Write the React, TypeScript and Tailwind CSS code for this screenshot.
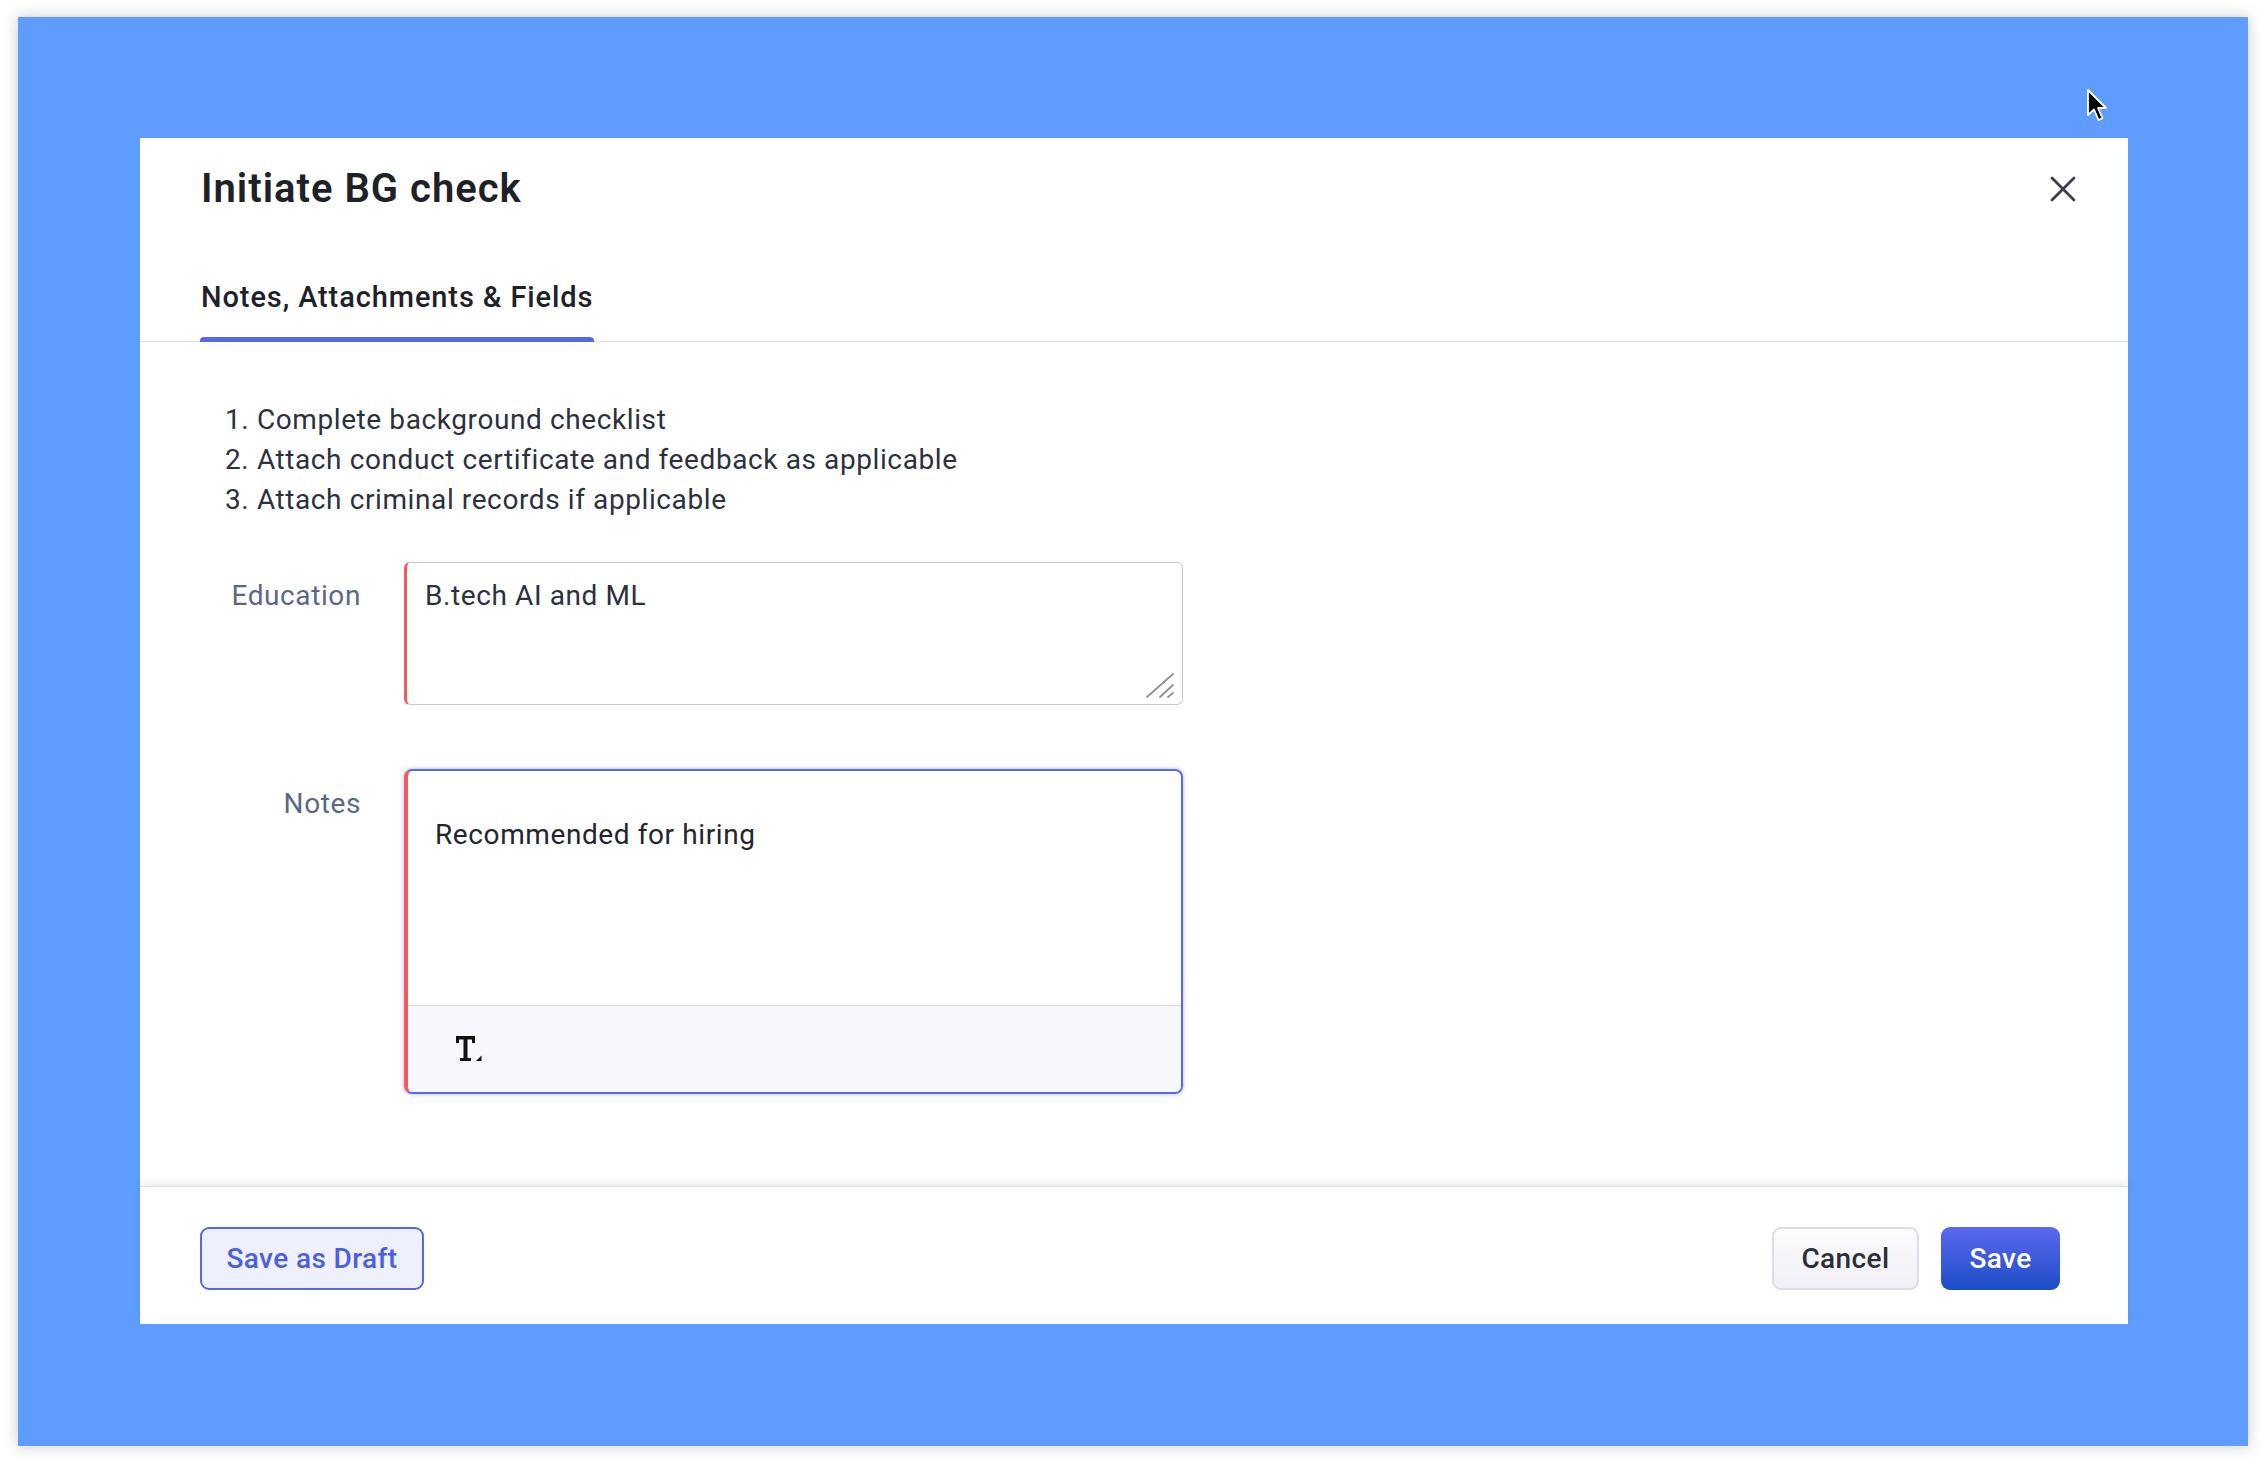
import { X } from 'lucide-react';

function Cursor() {
  return (
    <svg width="22" height="36" viewBox="0 0 22 36" className="absolute left-[2068px] top-[71px]">
      <path
        d="M2 2 L2 27 L8 21.5 L12.5 32 L16.5 30.2 L12 20 L20 20 Z"
        fill="#000"
        stroke="#fff"
        strokeWidth="1.8"
        strokeLinejoin="round"
      />
    </svg>
  );
}

function ResizeHandle() {
  return (
    <svg width="28" height="26" viewBox="0 0 28 26" className="absolute right-[8px] bottom-[6px]">
      <g stroke="#8e909a" strokeWidth="1.8" strokeLinecap="round">
        <line x1="1" y1="25" x2="27" y2="2" />
        <line x1="14" y1="25" x2="27" y2="13" />
        <line x1="22" y1="25" x2="27" y2="21" />
      </g>
    </svg>
  );
}

// text-format icon from the editor toolbar
function TextFormatIcon() {
  return (
    <svg width="26" height="26" viewBox="0 0 26 26">
      <g fill="#111">
        <rect x="0" y="0" width="19" height="3.5" />
        <rect x="0" y="0" width="3" height="7" />
        <rect x="16" y="0" width="3" height="7" />
        <rect x="7.5" y="0" width="4" height="25" />
        <rect x="4" y="22" width="11" height="3" />
        <polygon points="25.5,19.5 25.5,25 20,25" />
      </g>
    </svg>
  );
}

const checklist = [
  'Complete background checklist',
  'Attach conduct certificate and feedback as applicable',
  'Attach criminal records if applicable',
];

export default function App() {
  return (
    <div className="h-[1464px] w-full bg-white pt-[17px] pl-[18px] font-['Roboto',sans-serif]">
      <div className="relative w-[2230px] h-[1429px] bg-[#5e9dfd] pt-[121px] pl-[122px] shadow-[0_0_14px_rgba(40,60,80,0.28)]">
        <Cursor />
        <div className="w-[1988px] h-[1186px] bg-white flex flex-col">
          {/* header */}
          <div className="flex items-center justify-between pl-[61px] pr-[43px] pt-[27px]">
            <h1 className="text-[40px] leading-[48px] font-semibold tracking-[1px] text-[#1f2128]">Initiate BG check</h1>
            <button className="text-[#393e4a]">
              <X size={44} strokeWidth={1.5} />
            </button>
          </div>
          <div className="mt-[66px] pl-[60px] border-b border-[#dddbea]">
            <div className="inline-flex flex-col">
              <span className="text-[29px] leading-[36px] font-medium tracking-[0.9px] text-[#1f2128] px-px">
                Notes, Attachments &amp; Fields
              </span>
              <span className="mt-[22px] -mb-px h-[5px] rounded-t-[4px] bg-[#5668ea]" />
            </div>
          </div>

          {/* body */}
          <div className="flex-1 pt-[58px]">
            <ol className="pl-[85px] text-[28px] leading-[40px] tracking-[0.6px] text-[#2c3140]">
              {checklist.map((t, i) => (
                <li key={i}>
                  {i + 1}. {t}
                </li>
              ))}
            </ol>

            <div className="mt-[42px] grid grid-cols-[221px_779px] gap-x-[43px] gap-y-[64px] text-[28px] leading-[36px] tracking-[0.6px]">
              <div className="pt-[16px] text-right text-[#5b6885]">Education</div>
              <div className="relative h-[143px] rounded-[6px] border border-[#c8c8d4] border-l-[3px] border-l-[#f35b5b] pl-[18px] pt-[15px] text-[#2c3140]">
                B.tech AI and ML
                <ResizeHandle />
              </div>

              <div className="pt-[17px] text-right text-[#5b6885]">Notes</div>
              <div className="h-[325px] flex flex-col rounded-[8px] border-2 border-[#5668ee] border-l-4 border-l-[#f35b5b] shadow-[0_0_5px_rgba(86,104,238,0.45)] overflow-hidden">
                <div className="flex-1 pl-[27px] pt-[46px] text-[#22252e]">Recommended for hiring</div>
                <div className="h-[87px] border-t border-[#d5d5df] bg-[#f7f8fe] flex items-center pl-[48px]">
                  <TextFormatIcon />
                </div>
              </div>
            </div>
          </div>

          {/* footer */}
          <div className="h-[138px] border-t border-[#dcdce4] shadow-[0_-4px_7px_rgba(0,0,0,0.07)] flex items-start justify-between pt-[40px] pl-[60px] pr-[68px] text-[28px] tracking-[0.4px]">
            <button className="w-[224px] h-[63px] rounded-[9px] border-2 border-[#5668ea] bg-[#eef1fd] font-medium text-[#4b5fe0]">
              Save as Draft
            </button>
            <div className="flex gap-[22px]">
              <button className="w-[147px] h-[63px] rounded-[9px] border-2 border-[#dcdcea] bg-gradient-to-b from-[#fcfcfe] to-[#efeff5] font-medium text-[#2b2f3a]">
                Cancel
              </button>
              <button className="w-[119px] h-[63px] rounded-[9px] bg-gradient-to-b from-[#5a68f0] to-[#184dc6] font-medium text-white">
                Save
              </button>
            </div>
          </div>
        </div>
      </div>
    </div>
  );
}
